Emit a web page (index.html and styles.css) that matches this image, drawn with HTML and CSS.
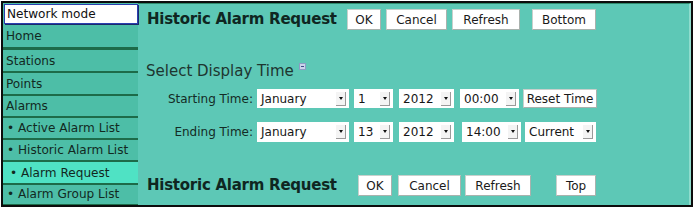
FILE: index.html
```html
<!DOCTYPE html>
<html>
<head>
<meta charset="utf-8">
<link rel="stylesheet" href="styles.css">
</head>
<body>
<div class="frame">
  <nav class="side">
    <div class="netmode">Network mode</div>
    <div class="item first">Home</div>
    <div class="item">Stations</div>
    <div class="item">Points</div>
    <div class="item short">Alarms</div>
    <div class="item sub short">• Active Alarm List</div>
    <div class="item sub short">• Historic Alarm List</div>
    <div class="item sub sub2 active">• Alarm Request</div>
    <div class="item sub last">• Alarm Group List</div>
  </nav>
  <main class="main">
    <div class="head head-top">
      <h1 class="title">Historic Alarm Request</h1>
      <button class="btn b-ok">OK</button>
      <button class="btn b-cancel">Cancel</button>
      <button class="btn b-refresh">Refresh</button>
      <button class="btn b-bottom">Bottom</button>
    </div>
    <h2 class="section">Select Display Time<svg class="mini" width="7" height="7" viewBox="0 0 7 7"><rect x="0.5" y="0.5" width="6" height="6" fill="#c9d3ea" stroke="#8c9cc4"/><line x1="2" y1="3.5" x2="5" y2="3.5" stroke="#3b4f86"/></svg></h2>
    <div class="row r-start">
      <span class="label">Starting Time:</span>
      <span class="sel w-month"><span>January</span><i class="arr"></i></span>
      <span class="sel w-day"><span>1</span><i class="arr"></i></span>
      <span class="sel w-year"><span>2012</span><i class="arr"></i></span>
      <span class="sel w-time"><span>00:00</span><i class="arr"></i></span>
      <button class="btn btn-reset">Reset Time</button>
    </div>
    <div class="row r-end">
      <span class="label">Ending Time:</span>
      <span class="sel w-month"><span>January</span><i class="arr"></i></span>
      <span class="sel w-day"><span>13</span><i class="arr"></i></span>
      <span class="sel w-year"><span>2012</span><i class="arr"></i></span>
      <span class="sel w-time w-time2"><span>14:00</span><i class="arr"></i></span>
      <span class="sel w-cur"><span>Current</span><i class="arr"></i></span>
    </div>
    <div class="head head-bot">
      <h1 class="title">Historic Alarm Request</h1>
      <button class="btn bb-ok">OK</button>
      <button class="btn bb-cancel">Cancel</button>
      <button class="btn bb-refresh">Refresh</button>
      <button class="btn bb-top">Top</button>
    </div>
  </main>
</div>
</body>
</html>
```
FILE: styles.css
```css
* { box-sizing: border-box; }
html, body { margin: 0; padding: 0; background: #ffffff; }
body { font-family: "DejaVu Sans", Verdana, sans-serif; color: #10261f; }

.frame {
  margin: 1px 0 0 1px;
  width: 692px;
  height: 206px;
  border: 2px solid #0c0c0c;
  background: #5dc8b6;
  display: flex;
  overflow: hidden;
}

.side {
  width: 135px;
  flex: none;
  background: #4dbea7;
  display: flex;
  flex-direction: column;
  font-size: 12.1px;
}
.netmode {
  flex: none;
  margin: 1px 0 0 1px;
  height: 20px;
  background: #fff;
  border: 1px solid #2a3fb0;
  box-shadow: 1px 1px 0 #1b2a6a;
  padding-left: 2px;
  line-height: 18px;
  color: #111;
}
.item {
  flex: none;
  height: 23px;
  line-height: 22px;
  padding-left: 3px;
  border-bottom: 2px solid #1d6b49;
  color: #12291f;
  white-space: nowrap;
}
.item.short { height: 22px; line-height: 20px; }
.item.first { height: 26px; line-height: 24px; border-bottom-width: 3px; }
.item.last { height: 21px; line-height: 19px; }
.item.sub { padding-left: 4px; }
.item.sub2 { padding-left: 7px; }
.item.active { background: #4fe2c4; }

.main {
  flex: 1;
  padding-left: 8px;
  border-top: 1px solid #2e8a6c;
  border-right: 2px solid #8fdccd;
}

.head { display: flex; align-items: center; height: 21px; }
.head-top { margin-top: 5px; }
.head-bot { margin-top: 33px; }
.title {
  margin: 0;
  width: 200px;
  flex: none;
  font-size: 15px;
  letter-spacing: -0.25px;
  font-weight: bold;
  color: #0f2621;
  white-space: nowrap;
  line-height: 21px;
  padding-left: 1px;
}
.btn {
  font-family: "DejaVu Sans", Verdana, sans-serif;
  font-size: 12px;
  color: #1a1a1a;
  background: #fff;
  border: 1px solid #c8d0cc;
  border-right-color: #a9b2ae;
  border-bottom-color: #a9b2ae;
  height: 21px;
  padding: 0;
  margin: 0;
  text-align: center;
  border-radius: 0;
}
.b-ok { margin-left: 1px; width: 34px; }
.b-cancel { margin-left: 5px; width: 61px; }
.b-refresh { margin-left: 5px; width: 68px; }
.b-bottom { margin-left: 12px; width: 64px; }
.bb-ok { margin-left: 12px; width: 34px; }
.bb-cancel { margin-left: 6px; width: 63px; }
.bb-refresh { margin-left: 4px; width: 66px; }
.bb-top { margin-left: 25px; width: 40px; }

.section {
  margin: 32px 0 0 0;
  font-size: 15px;
  font-weight: normal;
  color: #1d3630;
  line-height: 18px;
  height: 18px;
  white-space: nowrap;
}
.mini { vertical-align: top; margin-left: 5px; margin-top: 1px; }

.row { display: flex; align-items: center; height: 19px; font-size: 12px; }
.r-start { margin-top: 9px; }
.r-end { margin-top: 14px; height: 20px; }
.label { width: 111px; flex: none; text-align: right; padding-right: 4px; color: #142b25; white-space: nowrap; }

.sel {
  flex: none;
  display: inline-flex;
  align-items: center;
  justify-content: space-between;
  background: #fff;
  height: 19px;
  padding: 0 3px 0 4px;
  margin-right: 6px;
  color: #161616;
  white-space: nowrap;
}
.r-end .sel { height: 20px; }
.arr {
  width: 10px;
  height: 14px;
  border-right: 1px solid #9a9a9a;
  border-bottom: 1px solid #9a9a9a;
  background: #f4f4f4;
  display: inline-flex;
  align-items: center;
  justify-content: center;
  flex: none;
}
.arr::before {
  content: "";
  border-left: 2.5px solid transparent;
  border-right: 2.5px solid transparent;
  border-top: 3px solid #111;
}
.w-month { width: 92px; margin-right: 5px; }
.w-day { width: 39px; }
.w-year { width: 55px; }
.w-time { width: 59px; margin-right: 4px; }
.w-time2 { margin-left: 2px; margin-right: 4px; }
.w-cur { width: 71px; }
.btn-reset { flex: none; width: 74px; height: 19px; }
```
